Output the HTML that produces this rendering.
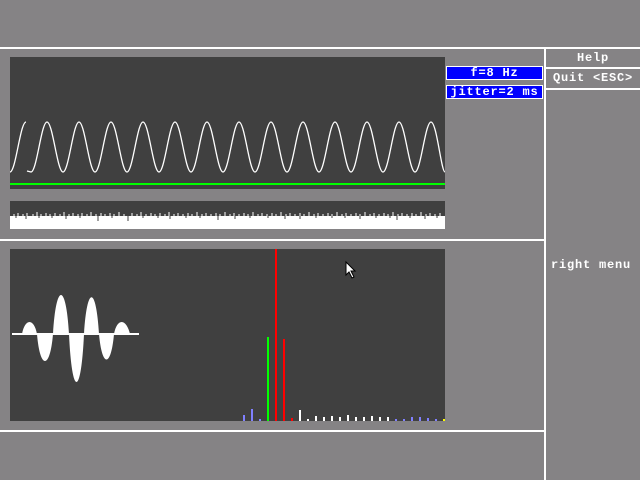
<!DOCTYPE html>
<html><head><style>
html,body{margin:0;padding:0;width:640px;height:480px;overflow:hidden;background:#858385;}
.t{position:absolute;font-family:"Liberation Mono",monospace;font-weight:bold;font-size:12px;letter-spacing:0.8px;color:#fff;white-space:pre;line-height:14px;}
</style></head><body>
<svg width="640" height="480" style="position:absolute;left:0;top:0" shape-rendering="crispEdges">
<rect width="640" height="480" fill="#858385"/>
<rect x="0" y="47" width="640" height="2" fill="#fff"/>
<rect x="544" y="47" width="2" height="433" fill="#fff"/>
<rect x="0" y="239" width="544" height="2" fill="#fff"/>
<rect x="0" y="430" width="544" height="2" fill="#fff"/>
<rect x="546" y="67" width="94" height="2" fill="#fff"/>
<rect x="546" y="88" width="94" height="2" fill="#fff"/>
<rect x="10" y="57" width="435" height="132" fill="#404040"/>
<rect x="10" y="183" width="435" height="2" fill="#00ff00"/>
<rect x="10" y="201" width="435" height="28" fill="#404040"/>
<rect x="10" y="216" width="435" height="13" fill="#fff"/>
<g stroke="#fff" stroke-width="1">
<path d="M14 216V214M18 216V213M23 216V214M27 216V213M33 216V214M37 216V212M41 216V214M46 216V213M50 216V214M55 216V213M60 216V214M64 216V212M69 216V214M73 216V213M78 216V214M82 216V213M87 216V214M91 216V212M96 216V214M101 216V213M105 216V214M110 216V213M114 216V214M119 216V212M124 216V214M132 216V213M137 216V214M141 216V212M146 216V214M151 216V213M155 216V214M160 216V213M165 216V214M169 216V212M174 216V214M178 216V213M183 216V214M188 216V213M192 216V214M197 216V212M202 216V214M206 216V213M211 216V214M216 216V213M220 216V214M225 216V212M230 216V214M234 216V213M239 216V214M244 216V213M248 216V214M253 216V212M258 216V214M262 216V213M267 216V214M272 216V213M276 216V214M281 216V212M286 216V214M290 216V213M295 216V214M300 216V213M304 216V214M309 216V212M314 216V214M318 216V213M323 216V214M328 216V213M332 216V214M337 216V212M342 216V214M346 216V213M351 216V214M356 216V213M360 216V214M365 216V212M370 216V214M374 216V213M379 216V214M384 216V213M388 216V214M393 216V212M398 216V214M402 216V213M407 216V214M412 216V213M416 216V214M421 216V212M426 216V214M430 216V213M435 216V214M440 216V213"/>
</g>
<g stroke="#404040" stroke-width="1">
<path d="M16 216V218M26 216V219M39 216V218M52 216V218M66 216V219M80 216V218M98 216V221M112 216V218M128 216V221M143 216V218M158 216V218M170 216V219M186 216V218M200 216V218M218 216V220M235 216V219M250 216V218M268 216V218M285 216V219M300 216V219M316 216V218M332 216V218M345 216V218M360 216V219M376 216V218M390 216V218M397 216V220M410 216V218M425 216V219M437 216V218"/>
</g>
<path fill="none" stroke="#fff" stroke-width="1.3" shape-rendering="auto" d="M10 172 C15.8 172 20.2 122 26 122 M27 171 L31 172 C36.8 172 41.2 122 47 122 S57.2 172 63 172 S73.2 122 79 122 S89.2 172 95 172 S105.2 122 111 122 S121.2 172 127 172 S137.2 122 143 122 S153.2 172 159 172 S169.2 122 175 122 S185.2 172 191 172 S201.2 122 207 122 S217.2 172 223 172 S233.2 122 239 122 S249.2 172 255 172 S265.2 122 271 122 S281.2 172 287 172 S297.2 122 303 122 S313.2 172 319 172 S329.2 122 335 122 S345.2 172 351 172 S361.2 122 367 122 S377.2 172 383 172 S393.2 122 399 122 S409.2 172 415 172 S425.2 122 431 122 S441.2 172 445 172"/>
<rect x="10" y="249" width="435" height="172" fill="#404040"/>
<rect x="12" y="333" width="127" height="2" fill="#fff"/>
<path fill="#fff" shape-rendering="auto" d="M22 334 C25 318 34 318 37 334 C40 370 50 370 53 334 C56 282 66 282 69 334 C72 398 81 398 84 334 C87 285 96 285 99 334 C102 368 111 368 114 334 C117 318 126 318 130 334 Z"/>
<rect x="243" y="415" width="2" height="6" fill="#8080ff"/>
<rect x="251" y="409" width="2" height="12" fill="#8080ff"/>
<rect x="259" y="419" width="2" height="2" fill="#8080ff"/>
<rect x="267" y="337" width="2" height="84" fill="#00ff00"/>
<rect x="275" y="249" width="2" height="172" fill="#ff0000"/>
<rect x="283" y="339" width="2" height="82" fill="#ff0000"/>
<rect x="291" y="418" width="2" height="3" fill="#ff0000"/>
<g fill="#fff">
<rect x="299" y="410" width="2" height="11"/><rect x="307" y="419" width="2" height="2"/><rect x="315" y="416" width="2" height="5"/><rect x="323" y="417" width="2" height="4"/><rect x="331" y="416" width="2" height="5"/><rect x="339" y="417" width="2" height="4"/><rect x="347" y="415" width="2" height="6"/><rect x="355" y="417" width="2" height="4"/><rect x="363" y="417" width="2" height="4"/><rect x="371" y="416" width="2" height="5"/><rect x="379" y="417" width="2" height="4"/><rect x="387" y="417" width="2" height="4"/>
</g>
<g fill="#8080ff">
<rect x="395" y="419" width="2" height="2"/><rect x="403" y="419" width="2" height="2"/><rect x="411" y="417" width="2" height="4"/><rect x="419" y="417" width="2" height="4"/><rect x="427" y="418" width="2" height="3"/><rect x="435" y="419" width="2" height="2"/>
</g>
<rect x="443" y="419" width="2" height="2" fill="#ffff00"/>
<rect x="446" y="66" width="97" height="14" fill="#fff"/>
<rect x="447" y="67" width="95" height="12" fill="#0000ff"/>
<rect x="446" y="85" width="97" height="14" fill="#fff"/>
<rect x="447" y="86" width="95" height="12" fill="#0000ff"/>
<path d="M346 262 L346 275 L349 272 L352 278 L354 277 L351 271 L355 271 Z" fill="#fff" stroke="#000" stroke-width="1" shape-rendering="auto"/>
</svg>
<div class="t" style="left:447px;top:66px;width:95px;text-align:center;">f=8 Hz</div>
<div class="t" style="left:447px;top:85px;width:95px;text-align:center;">jitter=2 ms</div>
<div class="t" style="left:546px;top:51px;width:94px;text-align:center;">Help</div>
<div class="t" style="left:546px;top:71px;width:94px;text-align:center;">Quit &lt;ESC&gt;</div>
<div class="t" style="left:551px;top:258px;">right menu</div>
</body></html>
